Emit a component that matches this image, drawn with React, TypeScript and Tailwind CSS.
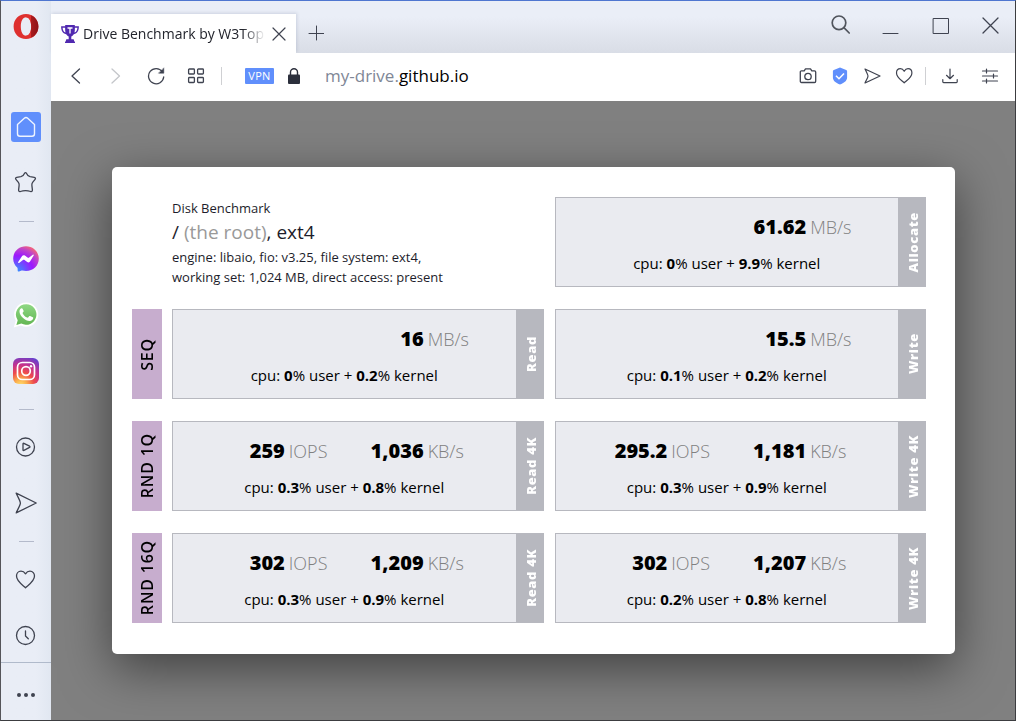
import type { ReactNode } from "react";

type Metric = { value: string; unit: string };
type Result = { tab: string; iops?: Metric; speed: Metric; user: string; kernel: string };

const allocate: Result = { tab: "Allocate", speed: { value: "61.62", unit: "MB/s" }, user: "0", kernel: "9.9" };

const rows: { label: string; cells: Result[] }[] = [
  {
    label: "SEQ",
    cells: [
      { tab: "Read", speed: { value: "16", unit: "MB/s" }, user: "0", kernel: "0.2" },
      { tab: "Write", speed: { value: "15.5", unit: "MB/s" }, user: "0.1", kernel: "0.2" },
    ],
  },
  {
    label: "RND 1Q",
    cells: [
      { tab: "Read 4K", iops: { value: "259", unit: "IOPS" }, speed: { value: "1,036", unit: "KB/s" }, user: "0.3", kernel: "0.8" },
      { tab: "Write 4K", iops: { value: "295.2", unit: "IOPS" }, speed: { value: "1,181", unit: "KB/s" }, user: "0.3", kernel: "0.9" },
    ],
  },
  {
    label: "RND 16Q",
    cells: [
      { tab: "Read 4K", iops: { value: "302", unit: "IOPS" }, speed: { value: "1,209", unit: "KB/s" }, user: "0.3", kernel: "0.9" },
      { tab: "Write 4K", iops: { value: "302", unit: "IOPS" }, speed: { value: "1,207", unit: "KB/s" }, user: "0.2", kernel: "0.8" },
    ],
  },
];

function Line({ size = 24, width = 1.3, color = "#3f4350", children }: { size?: number; width?: number; color?: string; children: ReactNode }) {
  return (
    <svg width={size} height={size} viewBox={`0 0 ${size} ${size}`} fill="none" stroke={color} strokeWidth={width} strokeLinecap="round" strokeLinejoin="round" aria-hidden="true">
      {children}
    </svg>
  );
}

function SideButton({ label, children }: { label: string; children: ReactNode }) {
  return (
    <button type="button" aria-label={label} className="flex h-12 w-full shrink-0 items-center justify-center">
      {children}
    </button>
  );
}

function SideDivider() {
  return (
    <div className="flex h-3 shrink-0 items-center">
      <div className="h-px w-[15px] bg-[#b4bacb]" />
    </div>
  );
}

function Sidebar() {
  return (
    <aside className="flex w-[50px] shrink-0 flex-col bg-linear-to-r from-[#e9edf6] from-70% to-[#e1e7f1]">
      <div className="flex h-[102px] shrink-0 justify-center pt-[13px]">
        <button type="button" aria-label="Opera menu" className="h-[25px]">
          <svg width="26" height="25" viewBox="0 0 26 25" aria-hidden="true">
            <defs>
              <linearGradient id="opera" x1="0" x2="1" y1="0" y2="0">
                <stop offset="0.5" stopColor="#e0312f" />
                <stop offset="0.55" stopColor="#a81b1e" />
                <stop offset="1" stopColor="#8d1117" />
              </linearGradient>
            </defs>
            <path fillRule="evenodd" fill="#de302f" d="M13 0C5.800 0 .6 5.400.6 12.500S5.800 25 13 25s12.400-5.400 12.400-12.500S20.200 0 13 0zm0 3.200c3.300 0 5.200 4.200 5.200 9.300s-1.900 9.300-5.200 9.300-5.200-4.200-5.200-9.300 1.900-9.300 5.200-9.300z" />
            <path fill="url(#opera)" d="M10 2.600C14 .2 18 .8 21.300 3.200 24 5.600 25.400 8.800 25.400 12.500s-1.400 6.900-4.100 9.300C18 24.200 14 24.800 10 22.400c1 .1 2 0 3-.6 3.300 0 5.200-4.200 5.200-9.300S16.300 3.200 13 3.200c-1-.5-2-.7-3-.6z" />
          </svg>
        </button>
      </div>
      <nav aria-label="Sidebar" className="flex flex-col items-center gap-2">
        <SideButton label="Home">
          <span className="flex size-[30px] items-center justify-center rounded-[3px] bg-[#608ffc]">
            <Line size={24} width={1.4} color="#eef4ff">
              <path d="M3.500 9.500 10.300 3.200a2.500 2.500 0 0 1 3.400 0l6.800 6.300v9.200a2.500 2.500 0 0 1-2.500 2.500H6a2.500 2.500 0 0 1-2.500-2.500z" />
            </Line>
          </span>
        </SideButton>
        <SideButton label="Bookmarks">
          <Line>
            <path d="M10.600 2.200a1 1 0 0 1 1.800 0c1 2.300 2.300 3.200 3.700 3.500l4.200.6c1.100.2 1.500 1.200.8 2l-2.500 3c-.8 1-.9 2-.7 3.300l.5 4.300c.1 1.200-.6 1.900-1.700 1.600-3.600-1.100-6.800-1.100-10.400 0-1.100.3-1.800-.4-1.700-1.600l.5-4.300c.2-1.300.1-2.300-.7-3.300l-2.500-3c-.7-.8-.3-1.800.8-2l4.200-.6c1.400-.3 2.700-1.200 3.700-3.500z" />
          </Line>
        </SideButton>
        <SideDivider />
        <SideButton label="Messenger">
          <svg width="26" height="26" viewBox="0 0 26 26" aria-hidden="true">
            <defs>
              <radialGradient id="messenger" cx="0.15" cy="1" r="1.150">
                <stop offset="0" stopColor="#3195ff" />
                <stop offset="0.55" stopColor="#9b18ff" />
                <stop offset="0.8" stopColor="#c045c8" />
                <stop offset="1" stopColor="#ff6b68" />
              </radialGradient>
            </defs>
            <path fill="url(#messenger)" d="M13 .3C5.800.3.200 5.500.2 12.500c0 3.700 1.500 6.800 4 9 .3.300.4.600.4 1l.1 2.300c0 .7.800 1.100 1.400.8l2.500-1.100c.2-.1.500-.1.700 0 1.200.3 2.400.5 3.700.5 7.200 0 12.800-5.300 12.800-12.300S20.200.3 13 .3z" />
            <path fill="#fff" d="m5.200 16 3.900-5.900c.6-1 1.900-1.200 2.800-.5l3 2.200c.3.200.6.200.9 0l4-3.100c.6-.4 1.300.3.900.9L17 15.500c-.6 1-1.900 1.200-2.800.5l-3-2.200c-.3-.2-.6-.2-.9 0l-4.200 3.100c-.5.400-1.300-.3-.9-.9z" />
          </svg>
        </SideButton>
        <SideButton label="WhatsApp">
          <svg width="26" height="26" viewBox="0 0 26 26" aria-hidden="true">
            <defs>
              <linearGradient id="whatsapp" x1="0" x2="0" y1="0" y2="1">
                <stop offset="0" stopColor="#8fd884" />
                <stop offset="1" stopColor="#63b654" />
              </linearGradient>
            </defs>
            <path fill="#fff" d="M13.300.5a12 12 0 0 0-10.500 18L.7 25.500l7.200-2A12.100 12.100 0 1 0 13.300.5z" />
            <path fill="url(#whatsapp)" d="M13.300 2.200a10.300 10.300 0 0 0-8.600 16l-1.300 4.700 4.900-1.300a10.300 10.300 0 1 0 5-19.400z" />
            <path fill="#fff" d="M9.700 6.900c-.3-.7-.7-.7-1.200-.6-1.500.5-2.200 2-2 3.600.6 4.400 5.700 8.900 10.200 9 1.900 0 3.400-1.300 3.500-2.700.1-.6 0-.7-.4-.9l-2.700-1.300c-.4-.2-.7-.1-1 .3l-1 1.200c-.2.3-.5.3-.9.1-2-.9-3.500-2.300-4.500-4.200-.2-.4-.1-.6.100-.9.5-.5 1.100-1 .8-1.700z" />
          </svg>
        </SideButton>
        <SideButton label="Instagram">
          <svg width="26" height="26" viewBox="0 0 26 26" aria-hidden="true">
            <defs>
              <radialGradient id="instagram" cx="0.3" cy="1.050" r="1.150">
                <stop offset="0" stopColor="#ffe070" />
                <stop offset="0.2" stopColor="#fbb04c" />
                <stop offset="0.45" stopColor="#ee4b4b" />
                <stop offset="0.7" stopColor="#c4328f" />
                <stop offset="1" stopColor="#6540ce" />
              </radialGradient>
            </defs>
            <rect width="26" height="26" rx="6" fill="url(#instagram)" />
            <g fill="none" stroke="#fff" strokeWidth="1.700">
              <rect x="4.500" y="4.500" width="17" height="17" rx="4.800" />
              <circle cx="13" cy="13" r="4.300" />
            </g>
            <circle cx="18" cy="8.200" r="1.200" fill="#fff" />
          </svg>
        </SideButton>
        <SideDivider />
        <SideButton label="Player">
          <Line>
            <circle cx="11.500" cy="12" r="9" />
            <path d="M9 8.800c0-.5.400-.7.900-.5l5.700 2.900c.5.300.5.900 0 1.200l-5.700 3c-.5.200-.9 0-.9-.5z" />
          </Line>
        </SideButton>
        <SideButton label="My Flow">
          <Line>
            <path d="m2.200 2.200 20 9.800-20 9.900c2.500-5.500 4.200-8 4.200-9.900s-1.700-4.300-4.200-9.800z" />
          </Line>
        </SideButton>
        <SideDivider />
        <SideButton label="Personal news">
          <Line>
            <path d="M11.500 6.800C10.400 5.100 8.900 4.200 7 4.200c-2.700 0-4.500 2.200-4.500 4.900 0 5.300 6.100 8.900 9 11.600 2.900-2.700 9-6.300 9-11.600 0-2.700-1.800-4.900-4.500-4.900-1.900 0-3.400.9-4.500 2.600z" />
          </Line>
        </SideButton>
        <SideButton label="History">
          <Line>
            <circle cx="11.500" cy="12.500" r="9" />
            <path d="M11.500 8v5l2.800 2.800" />
          </Line>
        </SideButton>
      </nav>
      <button type="button" aria-label="Sidebar setup" className="mt-auto flex h-[58px] shrink-0 items-center justify-center border-t border-[#b0bacb] pt-[6px]">
        <svg width="20" height="6" viewBox="0 0 20 6" fill="#3f4350" aria-hidden="true">
          <circle cx="3" cy="3" r="2" />
          <circle cx="10" cy="3" r="2" />
          <circle cx="17" cy="3" r="2" />
        </svg>
      </button>
    </aside>
  );
}

function WindowButton({ label, children }: { label: string; children: ReactNode }) {
  return (
    <button type="button" aria-label={label} className="flex h-12 w-[50px] shrink-0 items-center justify-center">
      {children}
    </button>
  );
}

function TabStrip() {
  return (
    <header className="flex h-[52px] items-end bg-linear-to-b from-[#eaeef7] from-30% to-[#d9dde6]">
      <div className="flex h-[39px] w-[245px] items-center bg-white pl-[10px] shadow-[1px_-1px_3px_rgba(120,130,160,0.25)]">
        <svg width="18" height="18" viewBox="0 0 18 18" aria-hidden="true">
          <path fill="#5029b0" d="M4.200 0h9.600v1.300h4.100c0 4.400-1.400 7.100-5.100 8-.8 1.200-1.700 1.900-2.500 2.200v2.700h1.500c.8 0 1.300.5 1.300 1.300v.9h.9V18H4v-1.600h.9v-.9c0-.8.5-1.300 1.300-1.300h1.500v-2.700c-.8-.3-1.700-1-2.500-2.200C1.500 8.400.1 5.700.1 1.300h4.100zM1.600 2.700c.2 2.400 1 4.100 2.900 4.900-.3-1.300-.4-3-.4-4.900zm14.800 0h-2.500c0 1.900-.1 3.600-.4 4.900 1.900-.8 2.700-2.500 2.900-4.900z" />
          <path stroke="#fff" strokeWidth="1.300" fill="none" d="M6.500 3h5M9 3v5.500" />
        </svg>
        <span className="ml-1 w-[186px] shrink-0 whitespace-nowrap text-[14px] leading-5 text-[#22242c] mask-r-from-86% mask-r-to-98%">Drive Benchmark by W3Top</span>
        <button type="button" aria-label="Close tab" className="flex size-5 shrink-0 items-center justify-center">
          <Line size={14} width={1.200}>
            <path d="m1 1 12 12M13 1 1 13" />
          </Line>
        </button>
      </div>
      <button type="button" aria-label="New tab" className="flex h-10 w-10 items-center justify-center">
        <Line size={16} width={1}>
          <path d="M8.500 1v14M1 8.500h15" />
        </Line>
      </button>
      <div className="ml-auto flex self-start">
        <WindowButton label="Search tabs">
          <Line size={20} width={1.700} color="#50545c">
            <circle cx="9" cy="7.800" r="6.800" />
            <path d="m13.900 12.700 5.300 5.300" />
          </Line>
        </WindowButton>
        <WindowButton label="Minimize">
          <Line size={18} width={1}>
            <path d="M2 17.500h15" />
          </Line>
        </WindowButton>
        <WindowButton label="Maximize">
          <Line size={18} width={1}>
            <path d="M2.500 2.500h15v15h-15z" />
          </Line>
        </WindowButton>
        <WindowButton label="Close">
          <Line size={18} width={1.300}>
            <path d="m2 2 15 15M17 2 2 17" />
          </Line>
        </WindowButton>
      </div>
    </header>
  );
}

function ToolButton({ label, wide, children }: { label: string; wide?: boolean; children: ReactNode }) {
  return (
    <button type="button" aria-label={label} className={wide ? "flex h-10 w-10 shrink-0 items-center justify-center" : "flex h-10 w-8 shrink-0 items-center justify-center"}>
      {children}
    </button>
  );
}

function Toolbar() {
  return (
    <div className="flex h-12 items-center bg-white px-[5px] pb-[2px]">
      <ToolButton label="Back" wide>
        <Line size={18}>
          <path d="M12.500 2 5 9l7.500 7" />
        </Line>
      </ToolButton>
      <ToolButton label="Forward" wide>
        <Line size={18} color="#c4c6ca">
          <path d="M5 2l7.500 7L5 16" />
        </Line>
      </ToolButton>
      <ToolButton label="Reload" wide>
        <Line size={18}>
          <path d="M15.300 4.700A7.600 7.600 0 1 0 16.700 10" />
          <path fill="#3f4350" strokeWidth="0.500" d="M16.800 1.200v5h-5z" />
        </Line>
      </ToolButton>
      <ToolButton label="Speed dial" wide>
        <Line size={18}>
          <rect x="1.600" y="2" width="5.800" height="5" rx="0.800" />
          <rect x="10.600" y="2" width="5.800" height="5" rx="0.800" />
          <rect x="1.600" y="10.500" width="5.800" height="5" rx="0.800" />
          <rect x="10.600" y="10.500" width="5.800" height="5" rx="0.800" />
        </Line>
      </ToolButton>
      <div className="ml-[5px] h-[18px] w-px bg-[#cfd0d3]" />
      <button type="button" className="ml-[23px] flex h-4 w-[29px] items-center justify-center rounded-[1px] bg-[#608ffc] text-[11px] leading-4 tracking-wide text-white">VPN</button>
      <button type="button" aria-label="Site information" className="ml-[14px]">
        <svg width="12" height="16" viewBox="0 0 12 16" aria-hidden="true">
          <path d="M2.500 8V4a3.500 3.300 0 0 1 7 0v4" fill="none" stroke="#2b2f3c" strokeWidth="1.400" />
          <rect y="6.500" width="12" height="9.500" rx="1" fill="#2b2f3c" />
        </svg>
      </button>
      <div role="textbox" aria-label="Address" contentEditable suppressContentEditableWarning className="ml-[25px] min-w-0 flex-1 whitespace-nowrap text-[17px] leading-6 text-black outline-none">
        <span className="text-[#7f8796]">my-drive.</span>github.io
      </div>
      <ToolButton label="Snapshot">
        <Line size={18}>
          <path d="M2.500 3.800h2.700l1.300-2h5l1.300 2h2.700c.7 0 1.200.5 1.200 1.200v9.300c0 .7-.5 1.200-1.200 1.200h-13c-.7 0-1.200-.5-1.200-1.200V5c0-.7.500-1.200 1.200-1.200z" />
          <circle cx="9" cy="9.500" r="3.200" />
        </Line>
      </ToolButton>
      <ToolButton label="Ad blocker">
        <svg width="16" height="18" viewBox="0 0 16 18" aria-hidden="true">
          <path fill="#608ffc" d="M8 .6 14.200 3c.6.200.9.600.9 1.200v6.300c0 3.500-3.300 5.600-7.100 7-3.800-1.400-7.100-3.500-7.100-7V4.200c0-.6.3-1 .9-1.200z" />
          <path fill="none" stroke="#fff" strokeWidth="1.600" d="m4 8.700 3 3 5-5.200" />
        </svg>
      </ToolButton>
      <ToolButton label="Send to My Flow">
        <Line size={18} width={1.200}>
          <path d="m2 2 15 7-15 7c1.800-3.800 3-5.500 3-7s-1.200-3.200-3-7z" />
        </Line>
      </ToolButton>
      <ToolButton label="Add to bookmarks">
        <Line size={18} width={1.200}>
          <path d="M9.200 4.300C8.300 2.700 7.100 1.600 5.400 1.600 3 1.600 1.500 3.400 1.500 5.900c0 4.600 5 7.300 7.700 9.900 2.700-2.600 7.700-5.300 7.700-9.900 0-2.500-1.500-4.300-3.900-4.300-1.700 0-2.900 1.100-3.800 2.700z" />
        </Line>
      </ToolButton>
      <div className="ml-[5px] mr-1 h-[18px] w-px bg-[#cfd0d3]" />
      <ToolButton label="Downloads" wide>
        <Line size={18} width={1.200}>
          <path d="M9 2v9.500M5.500 8.300 9 11.700l3.500-3.400M1.800 12.500v2.300c0 .5.300.8.800.8h12.800c.5 0 .8-.3.800-.8v-2.300" />
        </Line>
      </ToolButton>
      <ToolButton label="Easy setup" wide>
        <Line size={18} width={1.200}>
          <path d="M1.500 4h15M1.500 9h15M1.500 14h15M5.500 2v4M12.500 7v4M5.500 12v4" />
        </Line>
      </ToolButton>
    </div>
  );
}

function ResultCell({ result }: { result: Result }) {
  return (
    <article className="flex h-[90px] min-w-0 border border-[#b7b8bf] bg-[#eaebf0]">
      <div className="min-w-0 flex-1 pt-[15px]">
        <div className="grid grid-cols-[112fr_45fr_86fr_88fr] gap-x-1 whitespace-nowrap text-[18px] leading-7 text-[#808080]">
          <b className="text-right text-[20px] font-extrabold text-black">{result.iops?.value}</b>
          <span className="font-light">{result.iops?.unit}</span>
          <b className="text-right text-[20px] font-extrabold text-black">{result.speed.value}</b>
          <span className="font-light">{result.speed.unit}</span>
        </div>
        <p className="mt-3 text-center text-[15px] leading-5 text-black">
          cpu: <b>{result.user}</b>% user + <b>{result.kernel}</b>% kernel
        </p>
      </div>
      <div className="flex w-[27px] shrink-0 items-center justify-center bg-[#b7b8bf] pl-[3px]">
        <h3 className="rotate-180 whitespace-nowrap text-[13px] leading-5 font-extrabold tracking-wider text-white [writing-mode:vertical-rl]">{result.tab}</h3>
      </div>
    </article>
  );
}

function BenchmarkCard() {
  return (
    <section className="flex flex-col gap-[22px] rounded-[5px] bg-white pt-[30px] pr-[29px] pb-[31px] pl-5 shadow-[0_14px_50px_rgba(0,0,0,0.5)]">
      <div className="grid grid-cols-2 gap-[11px] pl-10">
        <div className="whitespace-nowrap pt-px text-[13px] leading-5 text-[#1d1d2b]">
          <p>Disk Benchmark</p>
          <h1 className="text-[19px] leading-[29px]">
            / <span className="text-[#999]">(the root)</span>, ext4
          </h1>
          <p>
            engine: libaio, fio: v3.25, file system: ext4,
            <br />
            working set: 1,024 MB, direct access: present
          </p>
        </div>
        <ResultCell result={allocate} />
      </div>
      {rows.map((row) => (
        <div key={row.label} className="flex gap-[10px]">
          <div className="flex w-[30px] shrink-0 items-center justify-center bg-[#c7adce]">
            <h2 className="rotate-180 whitespace-nowrap text-[16px] leading-5 font-semibold tracking-wider text-black [writing-mode:vertical-rl]">{row.label}</h2>
          </div>
          <div className="grid flex-1 grid-cols-2 gap-[11px]">
            {row.cells.map((cell) => (
              <ResultCell key={cell.tab} result={cell} />
            ))}
          </div>
        </div>
      ))}
    </section>
  );
}

export default function App() {
  return (
    <div className="flex min-h-screen border border-t-[#4f76d0] border-r-[#3c3d40] border-b-[#3c3d40] border-l-[#55555a] font-['Open_Sans','Noto_Sans',sans-serif]">
      <Sidebar />
      <div className="flex min-w-0 flex-1 flex-col">
        <TabStrip />
        <Toolbar />
        <main className="flex-1 overflow-hidden bg-[#808080] pt-[66px] pr-[60px] pb-[66px] pl-[61px]">
          <BenchmarkCard />
        </main>
      </div>
    </div>
  );
}
